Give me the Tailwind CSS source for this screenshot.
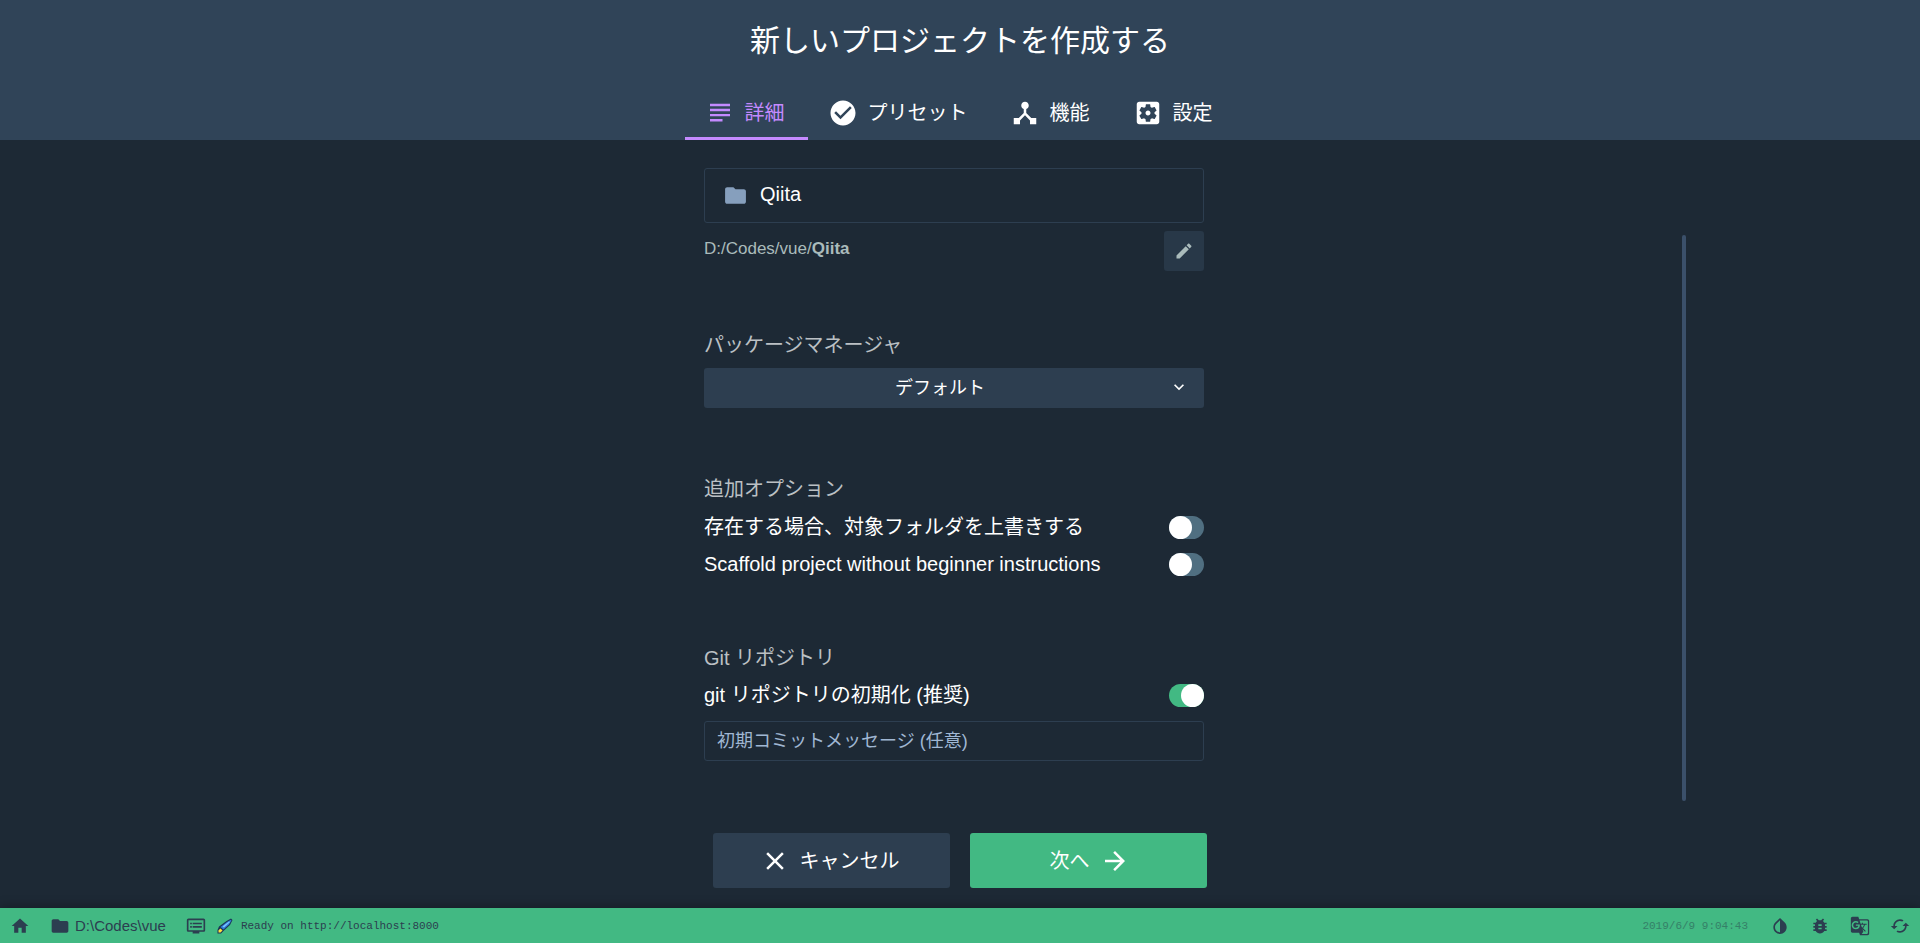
<!DOCTYPE html>
<html lang="ja">
<head>
<meta charset="utf-8">
<meta name="viewport" content="width=device-width, initial-scale=1">
<title>新しいプロジェクトを作成する</title>
<script src="https://cdn.jsdelivr.net/npm/@tailwindcss/browser@4"></script>
</head>
<body class="flex h-screen flex-col overflow-hidden bg-[#1d2935] font-['Liberation_Sans','Noto_Sans_CJK_JP',sans-serif] text-xl leading-[30px] font-normal text-white">

<header class="flex shrink-0 flex-col items-center bg-[#304458]">
  <h1 class="pt-5 pb-[26px] text-3xl leading-[42px]">新しいプロジェクトを作成する</h1>
  <nav class="flex" aria-label="手順">
    <a href="#details" aria-current="step" class="flex h-[52px] items-center gap-[10px] border-b-[3px] border-[#c48aff] pt-[5px] pr-[23px] pb-1 pl-5 text-[#c48aff]">
      <svg class="size-[30px] fill-current" viewBox="0 0 24 24"><path d="M4 4.600h16v1.900H4zM4 8.600h16v1.900H4zM4 12.700h16v1.900H4zM4 16.800h10v1.900H4z"/></svg>詳細</a>
    <a href="#presets" class="flex h-[52px] items-center gap-[10px] pt-[5px] pr-[22px] pb-[7px] pl-5">
      <svg class="size-[30px] fill-current" viewBox="0 0 24 24"><path d="M12 2C6.480 2 2 6.480 2 12s4.480 10 10 10 10-4.480 10-10S17.520 2 12 2zm-2 15l-5-5 1.410-1.410L10 14.170l7.590-7.590L19 8l-9 9z"/></svg>プリセット</a>
    <a href="#features" class="flex h-[52px] items-center gap-[10px] pt-[5px] pr-[23px] pb-[7px] pl-5">
      <svg class="size-[30px] fill-current" viewBox="0 0 24 24"><path d="M17 16l-4-4V8.820C14.160 8.400 15 7.300 15 6c0-1.660-1.340-3-3-3S9 4.340 9 6c0 1.300.840 2.400 2 2.820V12l-4 4H3v5h5v-3.050l4-4.200 4 4.200V21h5v-5h-4z"/></svg>機能</a>
    <a href="#configuration" class="flex h-[52px] items-center gap-[10px] pt-[5px] pr-[23px] pb-[7px] pl-5">
      <svg class="size-[30px] fill-current" viewBox="0 0 24 24"><path d="M12 10c-1.100 0-2 .900-2 2s.900 2 2 2 2-.900 2-2-.900-2-2-2zm7-7H5c-1.110 0-2 .900-2 2v14c0 1.100.890 2 2 2h14c1.110 0 2-.900 2-2V5c0-1.100-.890-2-2-2zm-1.750 9c0 .230-.020.460-.050.680l1.480 1.160c.130.110.170.300.080.450l-1.400 2.420c-.090.150-.270.210-.430.150l-1.740-.700c-.360.280-.760.510-1.180.690l-.260 1.850c-.030.170-.180.300-.350.300h-2.800c-.170 0-.320-.130-.350-.290l-.260-1.850c-.430-.180-.820-.410-1.180-.690l-1.740.700c-.160.060-.340 0-.430-.150l-1.400-2.420c-.090-.150-.050-.340.080-.450l1.480-1.160c-.030-.230-.050-.460-.050-.690s.020-.460.050-.680l-1.480-1.160c-.130-.110-.170-.300-.080-.450l1.400-2.420c.090-.150.270-.210.430-.150l1.740.700c.360-.280.760-.510 1.180-.690l.260-1.850c.030-.170.180-.300.350-.300h2.800c.170 0 .320.130.350.290l.260 1.850c.430.180.820.410 1.180.690l1.740-.700c.160-.060.340 0 .430.150l1.400 2.420c.090.150.050.340-.080.450l-1.480 1.160c.030.230.050.460.050.690z"/></svg>設定</a>
  </nav>
</header>

<main class="relative flex min-h-0 grow flex-col">
  <form id="details" class="mx-auto flex min-h-0 w-full max-w-[500px] grow -translate-x-[6px] flex-col pt-7">
    <label class="flex h-[55px] shrink-0 items-center gap-3 rounded-[3px] border border-[#2d3e50] pl-[18px]">
      <svg class="size-[25px] fill-[#869fbd]" viewBox="0 0 24 24"><path d="M10 4H4c-1.100 0-1.990.900-1.990 2L2 18c0 1.100.900 2 2 2h16c1.100 0 2-.900 2-2V8c0-1.100-.900-2-2-2h-8l-2-2z"/></svg>
      <input type="text" value="Qiita" aria-label="プロジェクトフォルダ" class="h-10 min-w-0 grow bg-transparent pb-[2px] outline-none">
    </label>
    <div class="mt-2 flex h-10 items-center justify-between text-[17px] text-[#aabbbb]">
      <p class="pb-1">D:/Codes/vue/<b class="font-bold">Qiita</b></p>
      <button type="button" aria-label="編集" class="flex size-10 items-center justify-center rounded-[3px] bg-[#283848]">
        <svg class="size-5 fill-current" viewBox="0 0 24 24"><path d="M3 17.250V21h3.750L17.810 9.940l-3.750-3.750L3 17.250zM20.710 7.040c.390-.390.390-1.020 0-1.410l-2.340-2.340c-.390-.390-1.020-.390-1.410 0l-1.830 1.830 3.750 3.750 1.830-1.830z"/></svg>
      </button>
    </div>

    <label for="manager" class="mt-[59px] text-[#bbc0c4]">パッケージマネージャ</label>
    <div class="relative mt-2">
      <select id="manager" class="block h-10 w-full appearance-none rounded-[3px] bg-[#2d3e50] pr-7 text-center text-lg [text-align-last:center]"><option>デフォルト</option></select>
      <svg class="pointer-events-none absolute top-[9px] right-[15px] size-5 fill-white" viewBox="0 0 24 24"><path d="M7.410 8.590L12 13.170l4.590-4.580L18 10l-6 6-6-6 1.410-1.410z"/></svg>
    </div>

    <fieldset class="mt-[66px]">
      <legend class="text-[#bbc0c4]">追加オプション</legend>
      <label class="mt-2 flex h-[30px] items-center justify-between">存在する場合、対象フォルダを上書きする
        <input type="checkbox" class="relative h-[23px] w-[35px] appearance-none rounded-full bg-[#506f81] before:absolute before:top-0 before:left-0 before:size-[23px] before:rounded-full before:bg-white checked:bg-[#42b983] checked:before:left-3"></label>
      <label class="mt-[7px] flex h-[30px] items-center justify-between">Scaffold project without beginner instructions
        <input type="checkbox" class="relative h-[23px] w-[35px] appearance-none rounded-full bg-[#506f81] before:absolute before:top-0 before:left-0 before:size-[23px] before:rounded-full before:bg-white checked:bg-[#42b983] checked:before:left-3"></label>
    </fieldset>

    <fieldset class="mt-16">
      <legend class="text-[#bbc0c4]">Git リポジトリ</legend>
      <label class="mt-[7px] flex h-[30px] items-center justify-between">git リポジトリの初期化 (推奨)
        <input type="checkbox" checked class="relative h-[23px] w-[35px] appearance-none rounded-full bg-[#506f81] before:absolute before:top-0 before:left-0 before:size-[23px] before:rounded-full before:bg-white checked:bg-[#42b983] checked:before:left-3"></label>
      <input type="text" aria-label="初期コミットメッセージ" placeholder="初期コミットメッセージ (任意)" class="mt-[11px] block h-10 w-full rounded-[3px] border border-[#2d3e50] bg-transparent px-3 text-lg outline-none placeholder:text-[#a0b7d3]">
    </fieldset>
  </form>

  <div class="flex shrink-0 justify-center gap-5 pb-5">
    <button type="button" class="flex h-[55px] w-[237px] items-center justify-center gap-[10px] rounded-[3px] bg-[#2d3e50] pr-1">
      <svg class="size-[30px] fill-current" viewBox="0 0 24 24"><path d="M19 6.410L17.590 5 12 10.590 6.410 5 5 6.410 10.590 12 5 17.590 6.410 19 12 13.410 17.590 19 19 17.590 13.410 12z"/></svg>キャンセル</button>
    <button type="submit" form="details" class="flex h-[55px] w-[237px] items-center justify-center gap-[10px] rounded-[3px] bg-[#42b983] pl-[2px]">次へ
      <svg class="size-[30px] fill-current" viewBox="0 0 24 24"><path d="M12 4l-1.410 1.410L16.170 11H4v2h12.170l-5.580 5.590L12 20l8-8z"/></svg></button>
  </div>

  <div class="absolute top-[95px] right-[234px] bottom-[107px] w-1 rounded-full bg-[#3b506a]"></div>
</main>

<footer class="z-10 flex h-[35px] shrink-0 items-center bg-[#42b983] text-[15px] leading-5 text-[#2c3e50] shadow-[0_-2px_10px_rgba(0,0,0,0.25)]">
  <a href="#home" aria-label="ホーム" class="ml-[10px]"><svg class="size-5 fill-current" viewBox="0 0 24 24"><path d="M10 20v-6h4v6h5v-8h3L12 3 2 12h3v8z"/></svg></a>
  <a href="#folder" class="ml-5 flex items-center gap-[5px]"><svg class="size-5 fill-current" viewBox="0 0 24 24"><path d="M10 4H4c-1.100 0-1.990.900-1.990 2L2 18c0 1.100.900 2 2 2h16c1.100 0 2-.900 2-2V8c0-1.100-.900-2-2-2h-8l-2-2z"/></svg>D:\Codes\vue</a>
  <button type="button" aria-label="ログ" class="ml-5"><svg class="size-5 fill-current" viewBox="0 0 24 24"><path d="M21 3H3c-1.100 0-2 .900-2 2v12c0 1.100.900 2 2 2h5v2h8v-2h5c1.100 0 1.990-.900 1.990-2L23 5c0-1.100-.900-2-2-2zm0 14H3V5h18v12zm-2-9H8v2h11V8zm0 4H8v2h11v-2zM7 8H5v2h2V8zm0 4H5v2h2v-2z"/></svg></button>
  <svg class="ml-[11px] size-4" viewBox="0 0 16 16"><path d="M2 8.500L9.500 3 14 .500 15.500 2 13 7l-6 5.500-3 3H.500V12z" fill="#1c3557"/><path d="M3.500 9L10 4l4-2.200.400.700L12 6.500 6.500 11.500z" fill="#2f7fdc"/><path d="M5.500 8.500L12 3.500l1 .500-6 5.500z" fill="#7cc4ff"/><path d="M1.500 12.200l2-1.700 2 2-2 2h-2z" fill="#ffe13b"/></svg>
  <span class="ml-2 font-['Liberation_Mono',monospace] text-[11px]">Ready on http://localhost:8000</span>
  <time class="ml-auto font-['Liberation_Mono',monospace] text-[11px] text-[#358068]">2019/6/9 9:04:43</time>
  <div class="mr-[10px] ml-[22px] flex gap-5">
    <button type="button" aria-label="ダークモード"><svg class="size-5 fill-current" viewBox="0 0 24 24"><path d="M17.660 7.930L12 2.270 6.340 7.930c-3.120 3.120-3.120 8.190 0 11.310C7.900 20.800 9.950 21.580 12 21.580s4.100-.780 5.660-2.340c3.120-3.120 3.120-8.190 0-11.310zM12 19.590c-1.600 0-3.110-.620-4.240-1.760C6.620 16.690 6 15.190 6 13.590s.620-3.110 1.760-4.240L12 5.100v14.490z"/></svg></button>
    <button type="button" aria-label="バグ報告"><svg class="size-5 fill-current" viewBox="0 0 24 24"><path d="M20 8h-2.810c-.450-.780-1.070-1.450-1.820-1.960L17 4.410 15.590 3l-2.170 2.170C12.960 5.060 12.490 5 12 5s-.960.060-1.410.170L8.410 3 7 4.410l1.620 1.630C7.880 6.550 7.260 7.220 6.810 8H4v2h2.090c-.050.330-.090.660-.090 1v1H4v2h2v1c0 .340.040.670.090 1H4v2h2.810c1.040 1.790 2.970 3 5.190 3s4.150-1.210 5.190-3H20v-2h-2.090c.050-.330.090-.660.090-1v-1h2v-2h-2v-1c0-.340-.040-.670-.090-1H20V8zm-6 8h-4v-2h4v2zm0-4h-4v-2h4v2z"/></svg></button>
    <button type="button" aria-label="翻訳"><svg class="size-5 fill-current" viewBox="0 0 24 24"><path d="M21 4H11l-1-3H3c-1.100 0-2 .900-2 2v15c0 1.100.900 2 2 2h8l1 3h9c1.100 0 2-.900 2-2V6c0-1.100-.900-2-2-2zM7 16c-2.760 0-5-2.240-5-5s2.240-5 5-5c1.350 0 2.480.500 3.350 1.300L9.030 8.570c-.380-.360-1.040-.780-2.030-.780-1.740 0-3.150 1.440-3.150 3.210S5.260 14.210 7 14.210c2.010 0 2.840-1.440 2.920-2.410H7v-1.710h4.680c.070.310.120.610.120 1.020C11.800 13.970 9.890 16 7 16zm6.170-5.420h3.700c-.430 1.250-1.110 2.430-2.050 3.470-.310-.350-.600-.720-.860-1.100l-.790-2.370zm8.330 9.920c0 .550-.450 1-1 1H14l2-2.500-1.040-3.100 3.100 3.100.920-.920-3.300-3.250.020-.020c1.130-1.250 1.930-2.690 2.400-4.220H20v-1.300h-4.530V8h-1.290v1.290h-1.440L11.460 5.500h9.040c.550 0 1 .450 1 1v14z"/></svg></button>
    <button type="button" aria-label="更新"><svg class="size-5 fill-current" viewBox="0 0 24 24"><path d="M19 8l-4 4h3c0 3.310-2.690 6-6 6-1.010 0-1.970-.250-2.800-.700l-1.460 1.460C8.970 19.540 10.430 20 12 20c4.420 0 8-3.580 8-8h3l-4-4zM6 12c0-3.310 2.690-6 6-6 1.010 0 1.970.250 2.800.700l1.460-1.460C15.030 4.460 13.570 4 12 4c-4.420 0-8 3.580-8 8H1l4 4 4-4H6z"/></svg></button>
  </div>
</footer>
</body>
</html>
